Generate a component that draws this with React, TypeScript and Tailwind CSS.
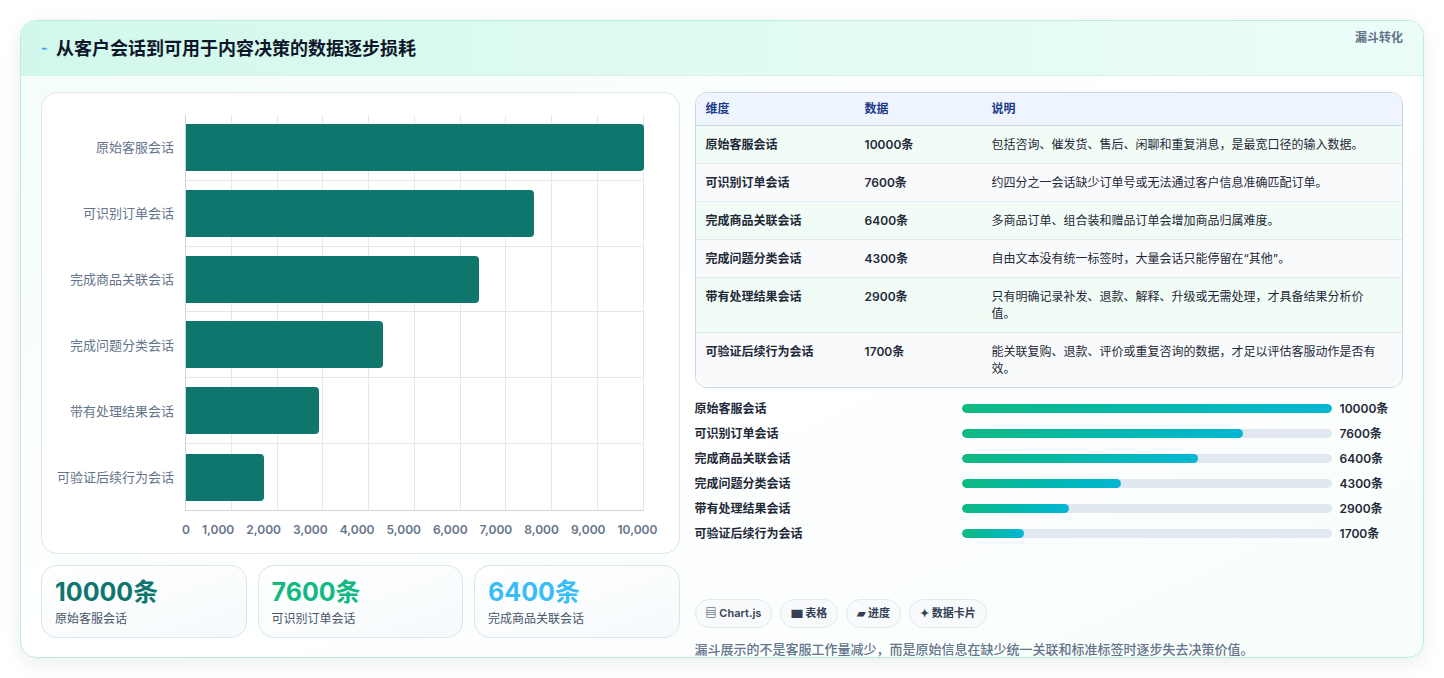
import React from 'react';

const rows = [
  { name: '原始客服会话', value: 10000, desc: '包括咨询、催发货、售后、闲聊和重复消息，是最宽口径的输入数据。' },
  { name: '可识别订单会话', value: 7600, desc: '约四分之一会话缺少订单号或无法通过客户信息准确匹配订单。' },
  { name: '完成商品关联会话', value: 6400, desc: '多商品订单、组合装和赠品订单会增加商品归属难度。' },
  { name: '完成问题分类会话', value: 4300, desc: '自由文本没有统一标签时，大量会话只能停留在“其他”。' },
  { name: '带有处理结果会话', value: 2900, desc: '只有明确记录补发、退款、解释、升级或无需处理，才具备结果分析价值。' },
  { name: '可验证后续行为会话', value: 1700, desc: '能关联复购、退款、评价或重复咨询的数据，才足以评估客服动作是否有效。' },
];

const ticks = ['0', '1,000', '2,000', '3,000', '4,000', '5,000', '6,000', '7,000', '8,000', '9,000', '10,000'];

function Chart() {
  return (
    <div className="h-[462px] rounded-2xl border border-[#dbe7ea] bg-white pl-[14px] pr-[35px] pt-[22px]">
      <div className="flex">
        <div className="flex w-[129px] flex-col pr-[11px]">
          {rows.map((r) => (
            <div key={r.name} className="flex h-[66px] items-center justify-end text-[13px] text-[#64748b]">
              {r.name}
            </div>
          ))}
        </div>
        <div className="relative h-[396px] flex-1 border-l border-b border-[#cbd5e1]">
          <div className="absolute inset-0 flex">
            {ticks.slice(1).map((t) => (
              <div key={t} className="flex-1 border-r border-[#e5e7eb]" />
            ))}
          </div>
          <div className="absolute inset-0 flex flex-col">
            {rows.map((r) => (
              <div key={r.name} className="flex h-[66px] items-center border-b border-[#e5e7eb] last:border-b-0">
                <div className="h-[47px] rounded-r-[4px] bg-[#0f766e]" style={{ width: `${r.value / 100}%` }} />
              </div>
            ))}
          </div>
        </div>
      </div>
      <div className="ml-[129px] mt-[10px] flex justify-between text-[12px] font-semibold text-[#64748b]">
        {ticks.map((t, i) => (
          <span key={t} className={i === 0 ? '-ml-[3px]' : i === 10 ? '-mr-[14px]' : ''}>{t}</span>
        ))}
      </div>
    </div>
  );
}

export default function App() {
  return (
    <div className="min-h-screen bg-white px-5 pt-5" style={{ fontFamily: 'Inter, "Noto Sans CJK SC", sans-serif' }}>
      <div className="h-[638px] overflow-hidden rounded-2xl border border-[#b9eede] bg-gradient-to-br from-[#f3fdf9] via-white to-[#f7fdfb] shadow-[0_6px_20px_rgba(15,23,42,0.08)]">
        <div className="flex h-[55px] items-center justify-between border-b border-[#d7f1ea] bg-gradient-to-r from-[#d2f8ec] to-[#ecfdf8] pl-5 pr-5">
          <div className="flex items-center gap-2">
            <span className="text-[11px] text-[#3b82f6]">⌁</span>
            <h1 className="text-[18px] font-bold text-[#0f172a]">从客户会话到可用于内容决策的数据逐步损耗</h1>
          </div>
          <span className="-mt-5 text-[12px] font-semibold text-[#64748b]">漏斗转化</span>
        </div>
        <div className="flex gap-[15px] px-5 pt-4">
          <div className="w-[640px]">
            <Chart />
            <div className="mt-[11px] grid grid-cols-3 gap-[11px]">
              {[
                { v: '10000条', l: '原始客服会话', c: 'text-[#0f766e]' },
                { v: '7600条', l: '可识别订单会话', c: 'text-[#10b981]' },
                { v: '6400条', l: '完成商品关联会话', c: 'text-[#38bdf8]' },
              ].map((s) => (
                <div key={s.l} className="h-[73px] rounded-2xl border border-[#d8e6ee] bg-gradient-to-br from-white to-[#f6fafc] px-[13px] pt-[10px]">
                  <div className={`text-[25px] font-bold leading-[32px] ${s.c}`}>{s.v}</div>
                  <div className="mt-[2px] text-[12px] text-[#475569]">{s.l}</div>
                </div>
              ))}
            </div>
          </div>
          <div className="w-[710px]">
            <div className="overflow-hidden rounded-xl border border-[#cbd9e6] text-[12px]">
              <div className="flex h-[33px] items-center border-b border-[#cbd9e6] bg-[#eef5fe] font-semibold text-[#1e3a8a]">
                <div className="w-[169px] pl-[10px]">维度</div>
                <div className="w-[127px]">数据</div>
                <div className="flex-1">说明</div>
              </div>
              {rows.map((r, i) => (
                <div key={r.name} className={`flex border-b border-[#e2e8f0] py-[10px] leading-[17px] text-[#1f2937] last:border-b-0 ${i % 2 === 0 ? 'bg-[#f2fcf6]' : 'bg-[#f8fafc]'}`}>
                  <div className="w-[169px] pl-[10px] font-semibold">{r.name}</div>
                  <div className="w-[127px] font-semibold">{r.value}条</div>
                  <div className="flex-1 pr-4">{r.desc}</div>
                </div>
              ))}
            </div>
            <div className="mt-[12px] flex flex-col gap-[8px]">
              {rows.map((r) => (
                <div key={r.name} className="flex h-[17px] items-center text-[12px] font-semibold text-[#1f2937]">
                  <div className="w-[267px]">{r.name}</div>
                  <div className="h-[9px] w-[370px] overflow-hidden rounded-full bg-[#e2e8f0]">
                    <div className="h-full rounded-full bg-gradient-to-r from-[#10b981] to-[#06b6d4]" style={{ width: `${r.value / 100}%` }} />
                  </div>
                  <div className="ml-2">{r.value}条</div>
                </div>
              ))}
            </div>
            <div className="mt-[57px] flex gap-[8px] text-[11px] font-semibold text-[#334155]">
              {['▤ Chart.js', '▆ 表格', '▰ 进度', '✦ 数据卡片'].map((c) => (
                <span key={c} className="rounded-full border border-[#e2e8f0] bg-[#f8fafc] px-[10px] py-[5px]">{c}</span>
              ))}
            </div>
            <p className="mt-[12px] text-[13px] font-medium text-[#64748b]">漏斗展示的不是客服工作量减少，而是原始信息在缺少统一关联和标准标签时逐步失去决策价值。</p>
          </div>
        </div>
      </div>
    </div>
  );
}
